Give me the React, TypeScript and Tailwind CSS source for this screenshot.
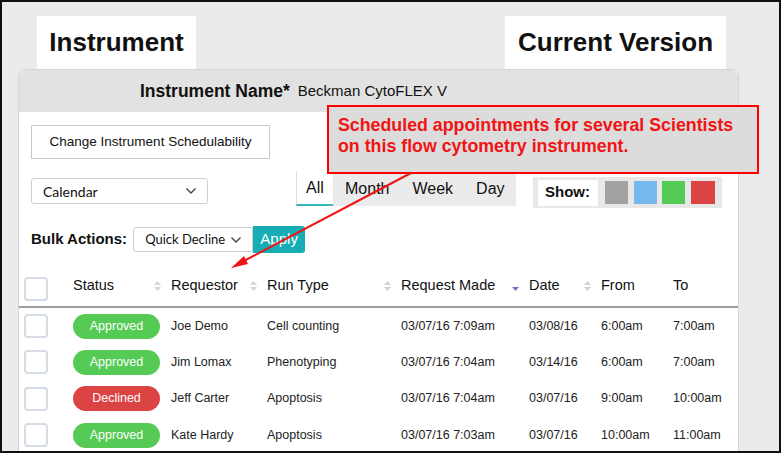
import React from "react";

const rows = [
  { status: "Approved", name: "Joe Demo", run: "Cell counting", made: "03/07/16 7:09am", date: "03/08/16", from: "6:00am", to: "7:00am" },
  { status: "Approved", name: "Jim Lomax", run: "Phenotyping", made: "03/07/16 7:04am", date: "03/14/16", from: "6:00am", to: "7:00am" },
  { status: "Declined", name: "Jeff Carter", run: "Apoptosis", made: "03/07/16 7:04am", date: "03/07/16", from: "9:00am", to: "10:00am" },
  { status: "Approved", name: "Kate Hardy", run: "Apoptosis", made: "03/07/16 7:03am", date: "03/07/16", from: "10:00am", to: "11:00am" },
];

const cols = "grid grid-cols-[54px_98px_96px_134px_128px_72px_72px_1fr] items-center";

function SortIcon({ active }: { active?: boolean }) {
  if (active) {
    return (
      <svg width="9" height="14" viewBox="0 0 9 14" className="mr-[9px]">
        <path d="M1 8 L8 8 L4.5 12 Z" fill="#6f73d2" />
      </svg>
    );
  }
  return (
    <svg width="9" height="14" viewBox="0 0 9 14" className="mr-[9px]">
      <path d="M1 6 L8 6 L4.5 2 Z" fill="#d3d3d3" />
      <path d="M1 8 L8 8 L4.5 12 Z" fill="#d3d3d3" />
    </svg>
  );
}

function Chevron() {
  return (
    <svg width="12" height="8" viewBox="0 0 12 8">
      <path d="M1.5 1.5 L6 6 L10.5 1.5" fill="none" stroke="#444" strokeWidth="1.4" />
    </svg>
  );
}

function Check() {
  return <div className="w-[24px] h-[24px] rounded-[4px] border-2 border-[#d5dce6] bg-white" />;
}

export default function App() {
  return (
    <div className="w-[783px] h-[455px] bg-white font-['Liberation_Sans',Arial,sans-serif] text-[#111]">
      <div className="relative w-[781px] h-[453px] border-2 border-[#111] bg-[#ebebeb] overflow-hidden">
        {/* labels */}
        <div className="flex pl-[35px] pt-[14px]">
          <div className="w-[159px] h-[53px] bg-white flex items-center justify-center text-[26px] font-bold">Instrument</div>
          <div className="ml-[309px] w-[221px] h-[53px] bg-white flex items-center justify-center text-[26px] font-bold">Current Version</div>
        </div>

        {/* panel */}
        <div className="ml-[16px] w-[721px] h-[400px] rounded-t-[6px] border border-[#d6d6d6] bg-white">
          <div className="h-[42px] bg-[#e2e2e2] rounded-t-[6px] flex items-center pl-[121px]">
            <span className="text-[17.5px] font-bold">Instrument Name*</span>
            <span className="ml-[8px] text-[15px]">Beckman CytoFLEX V</span>
          </div>

          <div className="pl-[12px]">
            <div className="pt-[13px]">
              <div className="w-[239px] h-[34px] border border-[#c8c8c8] flex items-center justify-center text-[13.5px]">
                Change Instrument Schedulability
              </div>
            </div>

            <div className="flex items-start mt-[12px]">
              <div className="mt-[7px] w-[177px] h-[26px] rounded-[3px] border border-[#cfcfcf] flex items-center justify-between pl-[11px] pr-[10px] text-[14px] font-['Lato',sans-serif]">
                <span>Calendar</span>
                <Chevron />
              </div>
              <div className="ml-[88px] flex h-[35px] bg-[#ebebeb] text-[16px]">
                <div className="w-[37px] bg-white border-l border-[#ddd] border-b-2 border-b-[#35b8bd] flex items-center justify-center">All</div>
                <div className="pl-[12px] flex items-center">Month</div>
                <div className="pl-[23px] flex items-center">Week</div>
                <div className="pl-[23px] pr-[11px] flex items-center">Day</div>
              </div>
              <div className="ml-[17px] mt-[6px] flex items-center gap-[5.5px] bg-[#e8e8e8] h-[31px] pl-[5px] pr-[7px]">
                <div className="w-[60px] h-[26px] bg-white flex items-center justify-center text-[15px] font-bold">Show:</div>
                <div className="ml-[2px] w-[23px] h-[23px] bg-[#a2a2a2]" />
                <div className="w-[23px] h-[23px] bg-[#74b8ee]" />
                <div className="w-[23px] h-[23px] bg-[#55cb55]" />
                <div className="w-[24px] h-[23px] bg-[#da4444]" />
              </div>
            </div>

            <div className="flex items-center mt-[18px]">
              <span className="text-[15px] font-bold">Bulk Actions:</span>
              <div className="ml-[6px] w-[120px] h-[25px] border border-[#cfcfcf] rounded-l-[3px] flex items-center justify-between pl-[11px] pr-[10px] text-[13px] font-['Lato',sans-serif]">
                <span>Quick Decline</span>
                <Chevron />
              </div>
              <div className="w-[52px] h-[27px] bg-[#17adb5] rounded-r-[3px] text-white text-[15px] flex items-center justify-center">Apply</div>
            </div>
          </div>

          {/* table */}
          <div className="mt-[19px]">
            <div className={`${cols} h-[36px] border-b-2 border-[#9d9d9d] text-[14.5px]`}>
              <div className="pl-[5px]"><Check /></div>
              <div className="flex items-center justify-between mb-[6px]"><span>Status</span><SortIcon /></div>
              <div className="flex items-center justify-between mb-[6px]"><span>Requestor</span><SortIcon /></div>
              <div className="flex items-center justify-between mb-[6px]"><span>Run Type</span><SortIcon /></div>
              <div className="flex items-center justify-between mb-[6px]"><span>Request Made</span><SortIcon active /></div>
              <div className="flex items-center justify-between mb-[6px]"><span>Date</span><SortIcon /></div>
              <div className="mb-[6px]">From</div>
              <div className="mb-[6px]">To</div>
            </div>
            {rows.map((r) => (
              <div key={r.name} className={`${cols} h-[36.3px] text-[12.5px] text-[#222]`}>
                <div className="pl-[5px]"><Check /></div>
                <div>
                  <div className={`w-[87px] h-[25px] rounded-full flex items-center justify-center text-white text-[12.5px] ${r.status === "Approved" ? "bg-[#55cb55]" : "bg-[#dc4343]"}`}>
                    {r.status}
                  </div>
                </div>
                <div>{r.name}</div>
                <div>{r.run}</div>
                <div>{r.made}</div>
                <div>{r.date}</div>
                <div>{r.from}</div>
                <div>{r.to}</div>
              </div>
            ))}
          </div>
        </div>

        {/* callout */}
        <div className="absolute left-[325px] top-[103px] w-[432px] h-[69px] border-2 border-[#ff0000] bg-[#dcdcdc] pl-[9px] pt-[8px] text-[17.8px] leading-[21px] font-bold text-[#f01414]">
          <div>Scheduled appointments for several Scientists</div>
          <div>on this flow cytometry instrument.</div>
        </div>
        <svg className="absolute left-0 top-0" width="781" height="453" viewBox="2 2 781 453">
          <line x1="411" y1="173" x2="240" y2="263" stroke="#f01414" strokeWidth="2" />
          <path d="M231 268 L244 256 L248 264 Z" fill="#f01414" />
        </svg>
      </div>
    </div>
  );
}
